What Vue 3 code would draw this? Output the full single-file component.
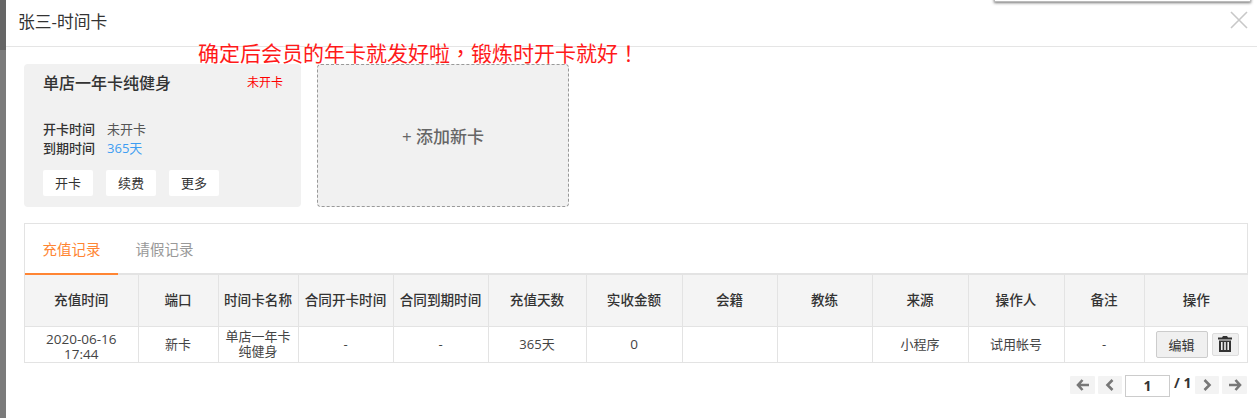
<script setup>
const columns = [
  { title: '充值时间', width: 113 }, { title: '端口', width: 80 }, { title: '时间卡名称', width: 80 },
  { title: '合同开卡时间', width: 95 }, { title: '合同到期时间', width: 95 }, { title: '充值天数', width: 98 },
  { title: '实收金额', width: 96 }, { title: '会籍', width: 95 }, { title: '教练', width: 95 },
  { title: '来源', width: 96 }, { title: '操作人', width: 96 }, { title: '备注', width: 80 }, { title: '操作', width: 104 }
]
</script>

<template>
  <div class="page">
    <div class="strip"></div>
    <div class="modal">
      <header class="head">
        <span class="title">张三-时间卡</span>
        <svg class="close" width="18" height="18" viewBox="0 0 18 18"><path d="M1 1L17 17M17 1L1 17" stroke="#c8c8c8" stroke-width="1.6" fill="none"/></svg>
      </header>
      <div class="popup"></div>
      <div class="note">确定后会员的年卡就发好啦<span class="punct">，</span>锻炼时开卡就好<span class="punct">！</span></div>

      <section class="cards">
        <div class="card">
          <div class="card-top">
            <strong class="card-name">单店一年卡纯健身</strong>
            <span class="state">未开卡</span>
          </div>
          <dl class="info">
            <div class="info-row"><dt>开卡时间</dt><dd>未开卡</dd></div>
            <div class="info-row"><dt>到期时间</dt><dd class="blue">365天</dd></div>
          </dl>
          <div class="card-actions">
            <button class="mini">开卡</button>
            <button class="mini">续费</button>
            <button class="mini">更多</button>
          </div>
        </div>
        <div class="add">+ 添加新卡</div>
      </section>

      <section class="panel">
        <nav class="tabs">
          <span class="tab active">充值记录</span>
          <span class="tab">请假记录</span>
        </nav>
        <table class="grid">
          <colgroup><col v-for="c in columns" :key="c.title" :style="{ width: c.width + 'px' }"></colgroup>
          <thead>
            <tr><th v-for="c in columns" :key="c.title">{{ c.title }}</th></tr>
          </thead>
          <tbody>
            <tr>
              <td class="tight date">2020-06-16<br>17:44</td>
              <td>新卡</td>
              <td class="tight">单店一年卡<br>纯健身</td>
              <td>-</td>
              <td>-</td>
              <td>365天</td>
              <td class="num">0</td>
              <td></td>
              <td></td>
              <td>小程序</td>
              <td>试用帐号</td>
              <td>-</td>
              <td class="cell-ops">
                <div class="ops">
                  <button class="edit">编辑</button>
                  <button class="trash" aria-label="删除">
                    <svg width="14" height="16" viewBox="0 0 14 16"><path fill="#333" d="M5 0h4l1 1.5h4V3.4H0V1.5h4zM1 4.5h12V16H1zM3 6v8h1.6V6zM6.2 6v8h1.6V6zM9.4 6v8H11V6z"/></svg>
                  </button>
                </div>
              </td>
            </tr>
          </tbody>
        </table>
      </section>

      <footer class="pager">
        <button class="pg wide"><svg width="14" height="12" viewBox="0 0 14 12"><path d="M6.5 1L2 6l4.5 5M2.5 6H13" stroke="#777" stroke-width="2.6" fill="none"/></svg></button>
        <button class="pg"><svg width="10" height="12" viewBox="0 0 10 12"><path d="M7.5 1L2.5 6l5 5" stroke="#777" stroke-width="2.6" fill="none"/></svg></button>
        <input class="pg-input" value="1" aria-label="页码">
        <span class="pg-total">/ 1</span>
        <button class="pg"><svg width="10" height="12" viewBox="0 0 10 12"><path d="M2.5 1l5 5-5 5" stroke="#777" stroke-width="2.6" fill="none"/></svg></button>
        <button class="pg wide"><svg width="14" height="12" viewBox="0 0 14 12"><path d="M7.5 1L12 6l-4.5 5M11.5 6H1" stroke="#777" stroke-width="2.6" fill="none"/></svg></button>
      </footer>
    </div>
  </div>
</template>

<style>
html, body { margin: 0; background: #fff; overflow: hidden; }
</style>

<style scoped>
.page {
  display: flex; width: 1257px; height: 418px; overflow: hidden;
  font-family: "Open Sans", "Noto Sans CJK SC", sans-serif; color: #333; font-size: 13px;
}
.strip { width: 6px; flex: none; background: linear-gradient(#666 0, #666 50px, #7b7b7b 50px); }
.modal { position: relative; flex: 1; min-width: 0; background: #fff; }
.head {
  height: 46px; border-bottom: 1px solid #e5e5e5; display: flex; align-items: center;
  justify-content: space-between; padding: 0 9px 0 12px; box-sizing: content-box;
}
.title { font-size: 16.8px; color: #333; margin-top: -4px; }
.close { margin-top: -6px; }
.popup {
  position: absolute; left: 988px; top: -6px; width: 255px; height: 6px; background: #fff;
  border: 1px solid #bbb; box-shadow: 0 1px 3px rgba(0,0,0,.55);
}
.note { position: absolute; left: 192px; top: 37px; font-size: 21px; line-height: 30px; color: #ff1a1a; white-space: nowrap; }
.punct { font-family: "Noto Sans CJK TC", sans-serif; }
.cards { display: flex; gap: 16px; padding: 17px 0 0 18px; }
.card {
  width: 277px; height: 143px; background: #f1f1f1; border-radius: 4px; box-sizing: border-box;
  padding: 6px 18px 0 19px; display: flex; flex-direction: column;
}
.card-top { display: flex; justify-content: space-between; align-items: center; height: 24px; }
.card-name { font-size: 16px; font-weight: 500; color: #333; }
.state { font-size: 12px; color: #f00; }
.info { margin: 26px 0 0; }
.info-row { display: flex; height: 19px; line-height: 19px; gap: 12px; }
.info-row dt { font-weight: 500; color: #333; }
.info-row dd { margin: 0; color: #555; }
.info-row dd.blue { color: #3e9df2; }
.card-actions { display: flex; gap: 13px; margin-top: 12px; }
.mini {
  width: 50px; height: 26px; padding: 0 0 1px; border: 0; border-radius: 2px; background: #fff;
  font: inherit; color: #333;
}
.add {
  width: 252px; height: 143px; box-sizing: border-box; border: 1px dashed #999; border-radius: 4px;
  background: #f1f1f1; display: flex; align-items: center; justify-content: center;
  font-size: 17px; font-weight: 500; color: #666;
}
.panel { margin: 16px 0 0 18px; width: 1224px; border: 1px solid #e3e3e3; border-bottom: 0; box-sizing: border-box; }
.tabs { display: flex; height: 49px; border-bottom: 2px solid #e3e3e3; box-sizing: content-box; }
.tab { width: 93px; box-sizing: border-box; text-align: center; line-height: 52px; font-size: 14.5px; color: #999; height: 51px; }
.tab.active { color: #ff8533; border-bottom: 2px solid #ff8533; }
.grid { width: 1223px; table-layout: fixed; border-collapse: collapse; }
th, td { border: 1px solid #e3e3e3; text-align: center; padding: 0 0 1px; font-size: 13px; box-sizing: border-box; }
tr > :first-child { border-left: 0; }
tr > :last-child { border-right: 0; }
thead tr > * { border-top: 0; }
th { height: 51px; background: #f4f4f4; font-size: 13.6px; font-weight: 500; color: #333; white-space: nowrap; padding-bottom: 2px; }
td { height: 36px; color: #444; }
.tight { line-height: 15px; }
.date { padding: 5px 0 0; }
.date, .num { font-size: 13.5px; }
.cell-ops { padding: 0; }
.ops { display: flex; align-items: center; justify-content: flex-start; gap: 4px; padding-left: 11px; }
.edit {
  width: 52px; height: 27px; padding: 0; font: inherit; color: #333; background: #f0f0f0;
  border: 1px solid #ccc; border-radius: 2px;
}
.trash {
  width: 27px; height: 23px; padding: 0; display: flex; align-items: center; justify-content: center;
  background: #f0f0f0; border: 1px solid #ddd; border-radius: 2px;
}
.pager { display: flex; justify-content: flex-end; align-items: flex-start; gap: 3px; padding: 13px 10px 0 0; }
.pg {
  width: 24px; height: 18px; padding: 0; border: 0; background: #f3f3f3; border-radius: 1px;
  display: flex; align-items: center; justify-content: center;
}
.pg.wide { width: 25px; }
.pg-input {
  width: 45px; height: 22px; box-sizing: border-box; margin: -1px 0 0 0; border: 1px solid #ccc;
  text-align: center; font: 700 14px "Open Sans", sans-serif; color: #333; padding: 0;
}
.pg-total { font-size: 14px; font-weight: 700; line-height: 18px; color: #333; margin: -2px 0 0 1px; width: 18px; }
</style>
